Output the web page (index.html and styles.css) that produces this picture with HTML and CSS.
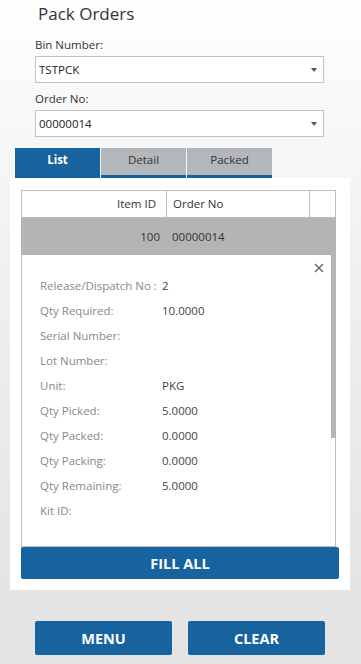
FILE: index.html
```html
<!DOCTYPE html>
<html lang="en">

<head>
    <meta charset="UTF-8">
    <title>Pack Orders</title>
    <link rel="stylesheet" href="styles.css">
</head>

<body>
    <div class="page">
        <h1 class="title">Pack Orders</h1>

        <div class="form">
            <label class="label">Bin Number:</label>
            <div class="select">TSTPCK<span class="caret"></span></div>

            <label class="label">Order No:</label>
            <div class="select">00000014<span class="caret"></span></div>
        </div>

        <div class="tabs">
            <div class="tab active">List</div>
            <div class="tab">Detail</div>
            <div class="tab">Packed</div>
        </div>

        <div class="panel">
            <div class="grid">
                <div class="grid-head">
                    <div class="cell num">Item ID</div>
                    <div class="cell">Order No</div>
                    <div class="cell"></div>
                </div>
                <div class="grid-body">
                    <div class="grid-row">
                        <div class="cell num">100</div>
                        <div class="cell">00000014</div>
                    </div>
                    <div class="detail">
                        <svg class="close" width="10" height="10" viewBox="0 0 10 10">
                            <path d="M1 1 L9 9 M9 1 L1 9" stroke="#6f6f6f" stroke-width="1.6" fill="none"/>
                        </svg>
                        <div class="line"><span class="key">Release/Dispatch No :</span><span class="val">2</span></div>
                        <div class="line"><span class="key">Qty Required:</span><span class="val">10.0000</span></div>
                        <div class="line"><span class="key">Serial Number:</span><span class="val"></span></div>
                        <div class="line"><span class="key">Lot Number:</span><span class="val"></span></div>
                        <div class="line"><span class="key">Unit:</span><span class="val">PKG</span></div>
                        <div class="line"><span class="key">Qty Picked:</span><span class="val">5.0000</span></div>
                        <div class="line"><span class="key">Qty Packed:</span><span class="val">0.0000</span></div>
                        <div class="line"><span class="key">Qty Packing:</span><span class="val">0.0000</span></div>
                        <div class="line"><span class="key">Qty Remaining:</span><span class="val">5.0000</span></div>
                        <div class="line"><span class="key">Kit ID:</span><span class="val"></span></div>
                    </div>
                    <!-- scrollbar thumb sits over the grid body -->
                    <div class="thumb"></div>
                </div>
            </div>
            <button class="btn fill">FILL ALL</button>
        </div>

        <div class="actions">
            <button class="btn">MENU</button>
            <button class="btn">CLEAR</button>
        </div>
    </div>
</body>

</html>
```

FILE: styles.css
```css
body {
    margin: 0;
    font-family: "Open Sans", "Noto Sans", sans-serif;
    color: #333;
}

.page {
    width: 361px;
    height: 664px;
    background: linear-gradient(#ffffff 0px, #fbfbfb 60px, #efefef 300px, #e4e4e4 600px);
    overflow: hidden;
}

.title {
    margin: 0;
    padding: 2px 0 0 38px;
    height: 32px;
    font-size: 17px;
    font-weight: 400;
    line-height: 24px;
    color: #333;
}

.form {
    padding: 0 37px 0 35px;
}

.label {
    display: block;
    height: 19px;
    padding-top: 3px;
    font-size: 11.5px;
    line-height: 16px;
    color: #333;
}

.select {
    position: relative;
    height: 25px;
    border: 1px solid #c2c2c2;
    background: #fff;
    font-size: 11.5px;
    line-height: 25px;
    padding-left: 3px;
    margin-bottom: 5px;
    color: #222;
}

.caret {
    position: absolute;
    right: 6px;
    top: 11px;
    border-left: 3px solid transparent;
    border-right: 3px solid transparent;
    border-top: 4px solid #555;
}

.tabs {
    display: flex;
    gap: 1px;
    margin: 11px 0 0 15px;
}

.tab {
    width: 85px;
    height: 27px;
    line-height: 24px;
    text-align: center;
    font-size: 11.5px;
    color: #333;
    background: #b4b7ba;
    border-bottom: 3px solid #1763a0;
}

.tab.active {
    background: #1763a0;
    color: #fff;
    font-weight: 700;
}

.panel {
    width: 318px;
    margin-left: 10px;
    padding: 12px 11px 11px;
    background: #fff;
}

.grid {
    width: 315px;
}

.grid-head {
    display: grid;
    grid-template-columns: 144px 143px 1fr;
    height: 26px;
    border: 1px solid #bdbdbd;
    font-size: 11.5px;
}

.grid-head .cell {
    line-height: 26px;
    padding: 0 6px;
    border-left: 1px solid #bdbdbd;
}

.grid-head .cell:first-child {
    border-left: none;
    padding-right: 10px;
}

.num {
    text-align: right;
}

.grid-body {
    position: relative;
}

.grid-row {
    display: grid;
    grid-template-columns: 144px 1fr;
    width: 310px;
    height: 37px;
    background: #b4b4b4;
    font-size: 11.5px;
    line-height: 37px;
    color: #333;
}

.grid-row .cell {
    padding: 0 7px;
}

.grid-row .cell:first-child {
    padding-right: 5px;
}

.detail {
    position: relative;
    height: 292px;
    border: 1px solid #bdbdbd;
    border-top: none;
    padding: 18px 0 0 18px;
    box-sizing: border-box;
}

.close {
    position: absolute;
    right: 11px;
    top: 8px;
}

.line {
    display: flex;
    height: 25px;
    line-height: 25px;
    font-size: 11.5px;
}

.key {
    width: 122px;
    color: #888;
}

.val {
    color: #444;
}

.thumb {
    position: absolute;
    right: 0;
    top: 0;
    width: 5px;
    height: 220px;
    background: #b4b4b4;
}

.btn {
    border: none;
    border-radius: 2px;
    background: #1763a0;
    color: #fff;
    font-family: "Open Sans", "Noto Sans", sans-serif;
    font-size: 14.5px;
    font-weight: 700;
    cursor: pointer;
}

.fill {
    display: block;
    width: 318px;
    height: 32px;
}

.actions {
    display: flex;
    gap: 16px;
    margin: 31px 0 0 35px;
}

.actions .btn {
    width: 137px;
    height: 34px;
}
```
